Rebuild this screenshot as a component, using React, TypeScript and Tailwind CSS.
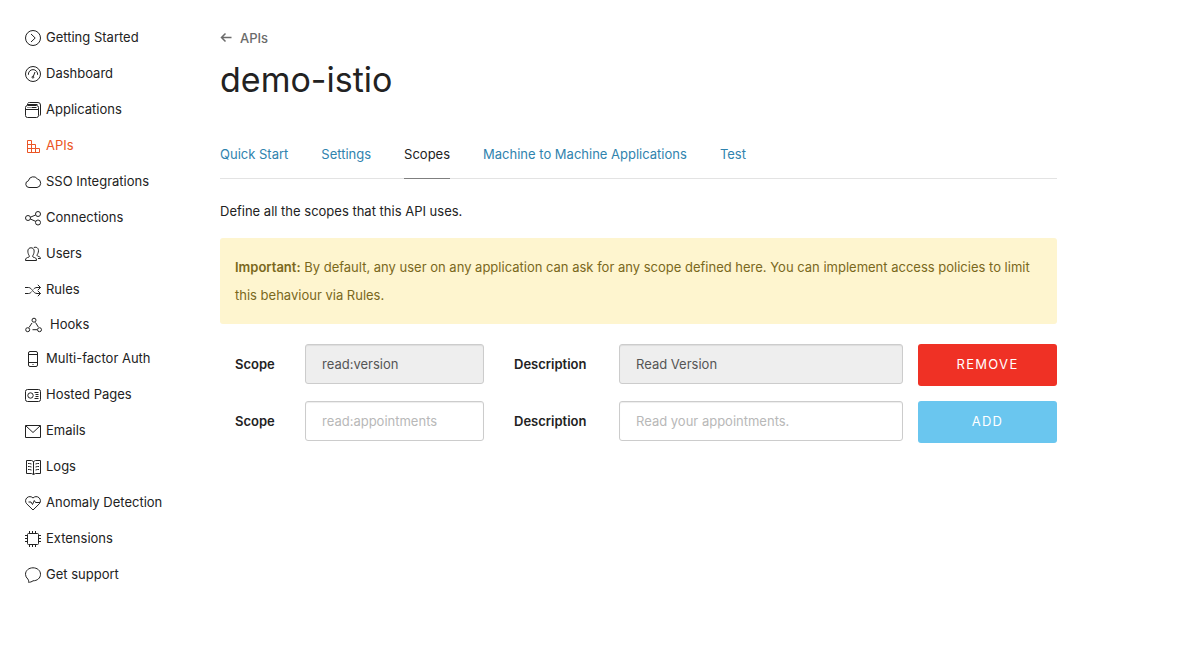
import type { ReactNode } from "react";

type NavItem = { label: string; icon: ReactNode; active?: boolean; compact?: boolean };

const navItems: NavItem[] = [
  {
    label: "Getting Started",
    icon: (
      <>
        <circle cx="8" cy="8" r="7.5" />
        <path d="M6 4 10.2 8 6 12" />
      </>
    ),
  },
  {
    label: "Dashboard",
    icon: (
      <>
        <circle cx="8" cy="8" r="7.5" />
        <path d="M3.4 8.8A4.7 4.7 0 0 1 8 3.6 4.7 4.7 0 0 1 12.6 8.8M10 6 8.3 10.4" />
        <circle cx="7.9" cy="11.2" r="0.9" />
      </>
    ),
  },
  {
    label: "Applications",
    icon: (
      <>
        <rect x="0.5" y="3.5" width="13" height="12" rx="2" />
        <path d="M.5 7.5h13M2.5 1.5Q3 .5 4.5 .5H13Q15.5 .5 15.5 3V12Q15.5 13.4 14.8 13.8M2.5 5.5h1M4.5 5.5h1M6.5 5.5h5M2 2.5h10.5" />
      </>
    ),
  },
  {
    label: "APIs",
    active: true,
    icon: <path d="M2.5 2.5H6.5V6.5H10.5V10.5H14.5V14.5H2.5ZM2.5 6.5H6.5V14.5M2.5 10.5H10.5V14.5" />,
  },
  {
    label: "SSO Integrations",
    icon: <path d="M4 13.5A3.4 3.4 0 0 1 3.4 6.8 5 5 0 0 1 12.4 4.9 4.4 4.4 0 0 1 12 13.5Z" />,
  },
  {
    label: "Connections",
    icon: (
      <>
        <circle cx="3" cy="8" r="2.5" />
        <circle cx="13" cy="4" r="2.5" />
        <circle cx="13" cy="12.5" r="2.5" />
        <path d="M5.4 7.2 10.6 5M5.3 9 10.8 11.4" />
      </>
    ),
  },
  {
    label: "Users",
    icon: (
      <>
        <path d="M.5 14.5C.5 11.8 1.5 12 4 11 4.8 10.5 4.3 9.8 3.7 8.8 2.2 5.5 2.6 1.8 6 1.8S9.8 5.5 8.3 8.8C7.7 9.8 7.2 10.5 8 11 10.5 12 11.5 11.8 11.5 14.5Z" />
        <path d="M8.8 1.5C12.5.2 14.7 3.5 12.8 7.6 12.2 8.8 11.6 9.5 12.5 10 14.5 11 15.5 10.8 15.5 12.5H13" />
      </>
    ),
  },
  {
    label: "Rules",
    icon: <path d="M0 5.5H3.5C7 5.5 8 11.5 12 11.5H15.5M0 11.5H3.5C5 11.5 6 10.5 6.8 9.5M8.6 7.2C9.5 6.2 10.5 5.5 12 5.5H15.5M12.8 2.8 15.5 5.5 12.8 8.2M12.8 8.8 15.5 11.5 12.8 14.2" />,
  },
  {
    label: "Hooks",
    compact: true,
    icon: (
      <>
        <circle cx="9" cy="3.2" r="2" />
        <circle cx="2.7" cy="12.7" r="2" />
        <circle cx="14.5" cy="12.7" r="2" />
        <path d="M7 6 4 10.5M10.5 5.5 13.3 10M7.5 12.7H12" />
      </>
    ),
  },
  {
    label: "Multi-factor Auth",
    icon: (
      <>
        <rect x="3.5" y="0.5" width="9" height="15" rx="1.5" />
        <path d="M3.5 3.5h9M3.5 11.5h9M7.5 13.5h1" />
      </>
    ),
  },
  {
    label: "Hosted Pages",
    icon: (
      <>
        <rect x="0.5" y="2.5" width="15" height="12" rx="2" />
        <circle cx="5.5" cy="8.5" r="2.7" />
        <path d="M9.5 5.5H13.5M10.5 7.5H13.5M10.5 9.5H13.5M9.5 11.5H13.5" />
      </>
    ),
  },
  {
    label: "Emails",
    icon: <path d="M.5 2.5H15.5V14.5H.5ZM.8 2.8 8 9.5 15.2 2.8" />,
  },
  {
    label: "Logs",
    icon: <path d="M1.5 1.5H6.5L8.5 2.5 10.5 1.5H15.5V14.5H10.5L8.5 15.5 6.5 14.5H1.5ZM8.5 2.5V15.5M3 4.5H4.5L6.5 5M3 7.5H4.5L6.5 8M3 10.5H4.5L6.5 11M14 4.5H12.5L10.5 5M14 7.5H12.5L10.5 8M14 10.5H12.5L10.5 11" />,
  },
  {
    label: "Anomaly Detection",
    icon: <path d="M8 15 1.7 8.8A4.2 4.2 0 0 1 8 3 4.2 4.2 0 0 1 14.3 8.8ZM3.5 7H6L7.5 9.5 9.3 5.5 10.5 7.5H15" />,
  },
  {
    label: "Extensions",
    icon: (
      <>
        <rect x="2.5" y="2.5" width="11" height="11" rx="1" />
        <path d="M4.5 0V2.5M7.5 0V2.5M10.5 0V2.5M4.5 13.5V16M7.5 13.5V16M10.5 13.5V16M0 4.5H2.5M0 7.5H2.5M0 10.5H2.5M13.5 4.5H16M13.5 7.5H16M13.5 10.5H16" />
      </>
    ),
  },
  {
    label: "Get support",
    icon: <path d="M3.5 15.3C3.8 14.3 3.7 13.3 2.8 12A6.3 6.3 0 0 1 .5 7.3C.5 3.5 3.8 .8 8 .8S15.5 3.5 15.5 7.3 12.2 13.8 8 13.8C6.8 14.8 5 15.3 3.5 15.3Z" />,
  },
];

function Sidebar() {
  return (
    <nav aria-label="Main" className="w-[220px] shrink-0 pt-5 pl-[25px]">
      <ul>
        {navItems.map((item) => (
          <li key={item.label}>
            <a
              href="#"
              className={`flex items-center text-[13px] ${item.compact ? "h-[33px] gap-[9px]" : "h-9 gap-[5px]"} ${
                item.active ? "text-[#eb5424]" : "text-[#222222]"
              }`}
            >
              <svg
                viewBox="0 0 16 16"
                className="size-4 shrink-0 overflow-visible"
                fill="none"
                stroke="currentColor"
                strokeLinejoin="round"
                aria-hidden="true"
              >
                {item.icon}
              </svg>
              {item.label}
            </a>
          </li>
        ))}
      </ul>
    </nav>
  );
}

const tabs = ["Quick Start", "Settings", "Scopes", "Machine to Machine Applications", "Test"];

function Tabs() {
  return (
    <nav aria-label="API sections" className="mt-[29px] flex gap-[33px] border-b border-[#e3e3e3]">
      {tabs.map((tab) => (
        <a
          key={tab}
          href="#"
          aria-current={tab === "Scopes" ? "page" : undefined}
          className={`-mb-px border-b pt-3 pb-3 text-[13px] leading-6 whitespace-nowrap ${
            tab === "Scopes" ? "border-[#7f7f7f] text-[#222222]" : "border-transparent text-[#3083ae]"
          }`}
        >
          {tab}
        </a>
      ))}
    </nav>
  );
}

type ScopeRowProps = {
  id: string;
  scope?: string;
  description?: string;
  action: string;
  actionClass: string;
};

function ScopeRow({ id, scope, description, action, actionClass }: ScopeRowProps) {
  const saved = scope !== undefined;
  const field =
    "h-10 w-full min-w-0 rounded-[3px] border border-[#cccccc] px-4 text-[13px] shadow-[inset_0_1px_1px_rgba(0,0,0,0.075)] placeholder:text-[#b8b8b8] disabled:bg-[#eeeeee] disabled:text-[#555555]";
  return (
    <form
      className="grid grid-cols-[55px_179fr_105px_284fr_139px] gap-x-[15px] pl-[15px]"
      onSubmit={(event) => event.preventDefault()}
    >
      <label htmlFor={`${id}-scope`} className="text-[13px] leading-10 font-semibold">
        Scope
      </label>
      <input id={`${id}-scope`} className={field} defaultValue={scope} placeholder="read:appointments" disabled={saved} />
      <label htmlFor={`${id}-description`} className="pl-[15px] text-[13px] leading-10 font-semibold">
        Description
      </label>
      <input
        id={`${id}-description`}
        className={field}
        defaultValue={description}
        placeholder="Read your appointments."
        disabled={saved}
      />
      <button type="submit" className={`h-[42px] rounded-[3px] text-[13px] tracking-widest text-white uppercase ${actionClass}`}>
        {action}
      </button>
    </form>
  );
}

export default function App() {
  return (
    <div className="flex min-h-screen bg-white font-['Inter',sans-serif] text-[#222222]">
      <Sidebar />
      <main className="min-w-0 flex-1 pt-[26px] pr-[139px]">
        <a href="#" className="flex w-fit items-center gap-2 text-[13px] leading-6 font-medium text-[#6b6b6b]">
          <svg viewBox="0 0 12 12" className="size-3" fill="none" stroke="currentColor" strokeWidth="1.5" aria-hidden="true">
            <path d="M11.5 5.5H1.5M5.5 1.5 1.5 5.5 5.5 9.5" />
          </svg>
          APIs
        </a>
        <h1 className="mt-[9px] text-[34px] leading-[42px]">demo-istio</h1>
        <Tabs />
        <p className="mt-5 text-[13px] leading-6">Define all the scopes that this API uses.</p>
        <div className="mt-[15px] rounded-[3px] bg-[#fef5cf] p-[15px] text-[13px] leading-7 text-[#7a681c]">
          <strong className="font-semibold">Important:</strong> By default, any user on any application can ask for any scope
          defined here. You can implement access policies to limit this behaviour via Rules.
        </div>
        <div className="mt-5 flex flex-col gap-[15px]">
          <ScopeRow id="saved" scope="read:version" description="Read Version" action="Remove" actionClass="bg-[#ef3125]" />
          <ScopeRow id="new" action="Add" actionClass="bg-[#6ac6ef]" />
        </div>
      </main>
    </div>
  );
}
